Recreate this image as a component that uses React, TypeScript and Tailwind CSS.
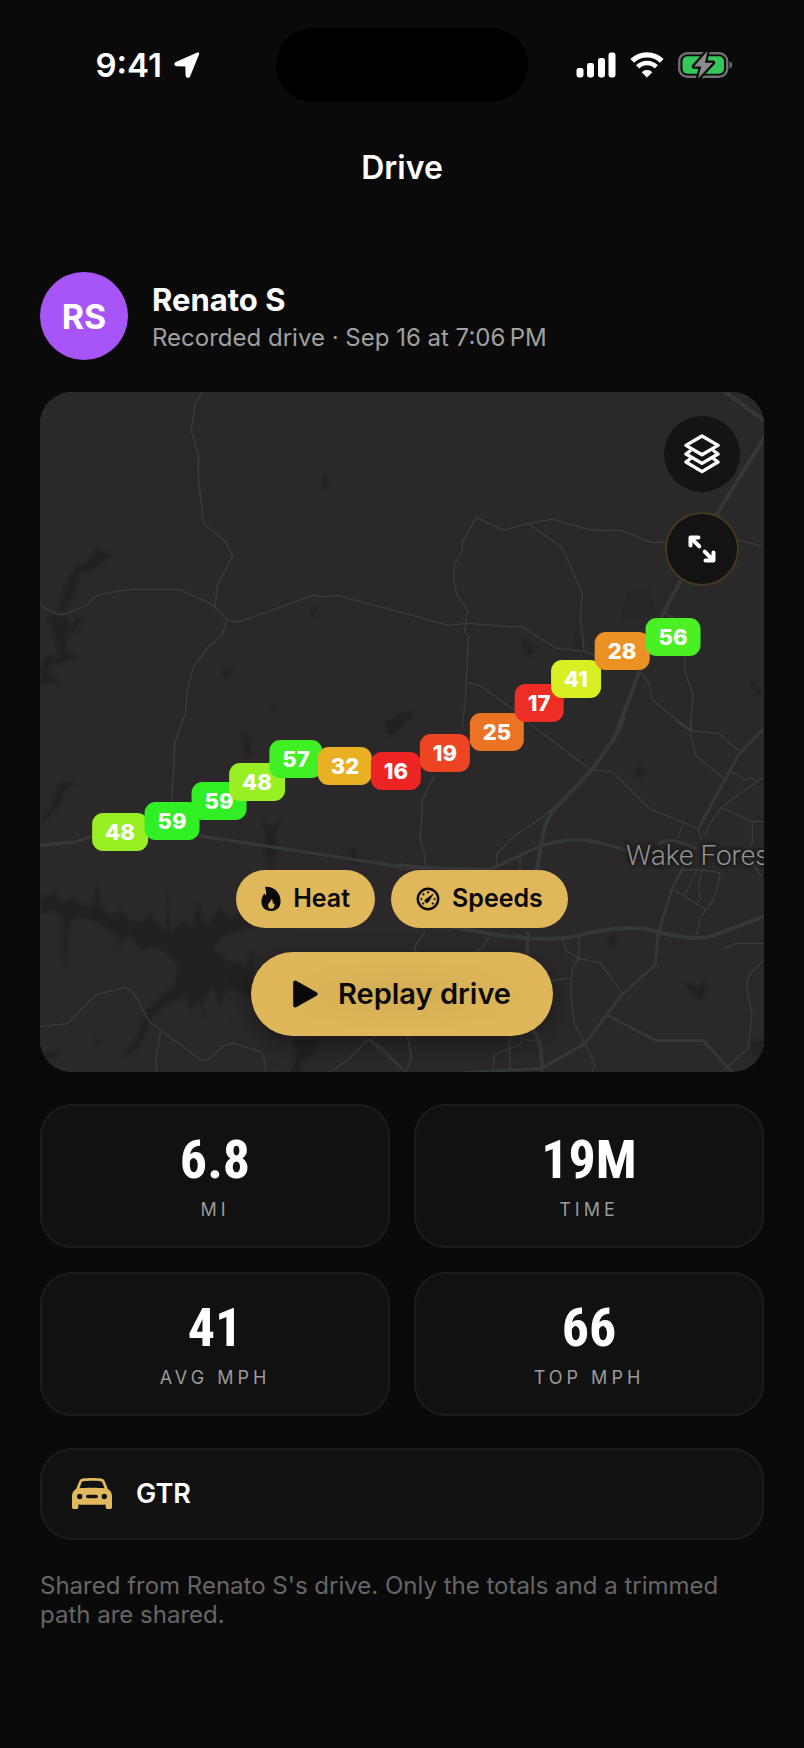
import React from "react";

const UI_FONT = "font-['Inter','Liberation_Sans',sans-serif]";
const DISPLAY_FONT = "font-['Roboto_Condensed','Roboto',sans-serif]";

const MAP_WIDTH = 724;
const MAP_HEIGHT = 680;

type Pin = { speed: number; x: number; y: number; tint: string };

const pins: Pin[] = [
  { speed: 48, x: 80, y: 440, tint: "bg-[#97ef24]" },
  { speed: 59, x: 132, y: 429, tint: "bg-[#30ef24]" },
  { speed: 59, x: 179, y: 409, tint: "bg-[#30ef24]" },
  { speed: 48, x: 217, y: 390, tint: "bg-[#97ef24]" },
  { speed: 57, x: 256, y: 367, tint: "bg-[#40ef24]" },
  { speed: 32, x: 305, y: 374, tint: "bg-[#eab024]" },
  { speed: 16, x: 356, y: 379, tint: "bg-[#ed2424]" },
  { speed: 19, x: 405, y: 361, tint: "bg-[#ed4424]" },
  { speed: 25, x: 457, y: 340, tint: "bg-[#eb7424]" },
  { speed: 17, x: 499, y: 311, tint: "bg-[#ed2e24]" },
  { speed: 41, x: 536, y: 287, tint: "bg-[#d8ef24]" },
  { speed: 28, x: 582, y: 259, tint: "bg-[#ec9224]" },
  { speed: 56, x: 633, y: 245, tint: "bg-[#4aef24]" },
];

const stats = [
  { value: "6.8", label: "MI" },
  { value: "19M", label: "TIME" },
  { value: "41", label: "AVG MPH" },
  { value: "66", label: "TOP MPH" },
];

function LocationArrow() {
  return (
    <svg viewBox="0 0 26 26" className="h-[26px] w-[26px]" fill="#fff" aria-hidden="true">
      <path
        d="M23.800 1.700 2.400 11.200c-1 .5-.8 1.600.3 1.600l10 .3.3 10.300c0 1.200 1.400 1.400 1.900.3Z"
        stroke="#fff"
        strokeWidth="2.800"
        strokeLinejoin="round"
      />
    </svg>
  );
}

function SignalBars() {
  return (
    <svg viewBox="0 0 40 26" className="h-[26px] w-10" fill="#fff" aria-hidden="true">
      <rect x="0.500" y="16" width="7" height="9.500" rx="2.400" />
      <rect x="11" y="11" width="7" height="14.500" rx="2.400" />
      <rect x="22" y="6" width="7" height="19.500" rx="2.400" />
      <rect x="32.500" y="0.500" width="7" height="25" rx="2.400" />
    </svg>
  );
}

function Wifi() {
  return (
    <svg viewBox="0 0 34 26" className="h-[26px] w-[34px]" fill="none" aria-hidden="true">
      <path d="M2.200 8.900a21 21 0 0 1 29.600 0" stroke="#fff" strokeWidth="5.200" />
      <path d="M7.700 14.800a13.200 13.200 0 0 1 18.600 0" stroke="#fff" strokeWidth="4.600" />
      <path
        d="M17 25.200l-4.900-4.900a7 7 0 0 1 9.800 0Z"
        fill="#fff"
        stroke="#fff"
        strokeWidth=".8"
        strokeLinejoin="round"
      />
    </svg>
  );
}

function Battery() {
  const bolt = "M29.500 0 16 15.500h7.200l-3.200 12L35 11.800h-8Z";
  return (
    <svg viewBox="0 0 55 28" className="h-7 w-[55px]" fill="none" aria-hidden="true">
      <rect x="1.200" y="2.200" width="48" height="23.600" rx="8" stroke="#6f6f6f" strokeWidth="2.400" />
      <rect x="4.500" y="5.300" width="41.500" height="17.500" rx="5" fill="#34c759" />
      <path d="M51.500 10.500v7c1.600-.5 2.600-1.900 2.600-3.500s-1-3-2.600-3.500Z" fill="#6f6f6f" />
      <path d={bolt} stroke="#0a0a0a" strokeWidth="4.400" strokeLinejoin="round" />
      <path d={bolt} fill="#8b8b8b" />
    </svg>
  );
}

function LayersIcon() {
  return (
    <svg
      viewBox="0 0 36 40"
      className="h-10 w-9"
      fill="none"
      stroke="#fff"
      strokeWidth="3.400"
      strokeLinejoin="round"
      strokeLinecap="round"
      aria-hidden="true"
    >
      <path d="M18 2 34 11.400 18 20.700 2 11.400Z" />
      <path d="M6 17 2 20 18 29.400 34 20l-4-3" />
      <path d="M6 25 2 28 18 37.600 34 28l-4-3" />
    </svg>
  );
}

function ExpandIcon() {
  return (
    <svg
      viewBox="0 0 28 28"
      className="h-7 w-7"
      fill="none"
      stroke="#fff"
      strokeWidth="4"
      strokeLinejoin="round"
      strokeLinecap="round"
      aria-hidden="true"
    >
      <path d="M2.500 10.500v-8h8M3.500 3.500l7.800 7.800" />
      <path d="M25.500 17.500v8h-8M24.500 24.500l-7.800-7.800" />
    </svg>
  );
}

function FlameIcon() {
  return (
    <svg viewBox="0 0 20 26" className="h-[26px] w-5" aria-hidden="true">
      <path
        fill="#0a0a0a"
        fillRule="evenodd"
        d="M5.200.8C12.400.6 19.600 6 19.600 15.400c0 5.900-4 9.600-9.700 9.600C4.200 25 .4 21.300.4 15.800c0-3.800 1.700-6.300 2.600-7.700.3-.5.9-.4 1.100.1.200.5.500.9.900 1.200.4-2.400.2-4.800-.8-7.100-.3-.8.1-1.500 1-1.500ZM10.600 12.400c.2 2.700-3.500 4-3.500 7 0 2 1.300 3.300 3.100 3.300 2 0 3.300-1.400 3.300-3.300 0-1-.2-1.800-.7-2.600-.2.700-.5 1.100-1 1.400.1-2-.1-4.100-1.200-5.800Z"
      />
    </svg>
  );
}

function GaugeIcon() {
  return (
    <svg viewBox="0 0 24 24" className="h-6 w-6" fill="none" aria-hidden="true">
      <circle cx="12" cy="12" r="10.200" stroke="#0a0a0a" strokeWidth="2.400" />
      <path
        d="M17 7.200 10.300 12a1.900 1.900 0 1 0 2.300 2.500Z"
        fill="#0a0a0a"
        stroke="#0a0a0a"
        strokeWidth=".8"
        strokeLinejoin="round"
      />
      <g fill="#0a0a0a">
        <circle cx="12" cy="5.400" r="1.100" />
        <circle cx="7.400" cy="7.400" r="1.100" />
        <circle cx="5.400" cy="12" r="1.100" />
        <circle cx="7.200" cy="16.600" r="1.100" />
        <circle cx="16.800" cy="16.600" r="1.100" />
        <circle cx="18.600" cy="12" r="1.100" />
      </g>
    </svg>
  );
}

function PlayIcon() {
  return (
    <svg viewBox="0 0 25 28" className="h-7 w-[25px]" aria-hidden="true">
      <path
        d="M1.200 2.500v23c0 .9.800 1.200 1.500.8l20.400-11.300c.8-.5.8-1.500 0-2L2.700 1.700C2 1.300 1.200 1.600 1.200 2.500Z"
        fill="#0a0a0a"
        stroke="#0a0a0a"
        strokeWidth="2"
        strokeLinejoin="round"
      />
    </svg>
  );
}

function CarIcon() {
  return (
    <svg viewBox="0 0 40 32" className="h-8 w-10" aria-hidden="true">
      <path
        fill="#e0b95c"
        fillRule="evenodd"
        d="M11 .6C13.500.2 16.500 0 20 0s6.500.2 9 .6c1.900.3 3.300 1.400 4 3.100l2.700 7.100c2.600 1.700 4.300 4 4.300 7V29.600c0 .8-.6 1.400-1.400 1.400h-3.500c-.8 0-1.400-.6-1.400-1.400V26.400C29.500 26.700 25 26.800 20 26.800s-9.500-.1-13.700-.4v3.200c0 .8-.6 1.400-1.400 1.400H1.400C.6 31 0 30.400 0 29.600V17.800c0-3 1.700-5.300 4.300-7L7 3.700C7.700 2 9.100.9 11 .6ZM11.200 3.300c-.8.1-1.300.6-1.600 1.300L7.500 10.300C10.800 9.900 15 9.700 20 9.700s9.200.2 12.500.6L30.400 4.600c-.3-.7-.8-1.200-1.600-1.300C26.400 3 23.400 2.800 20 2.800s-6.400.2-8.800.5ZM7.700 15.800a2.700 2.700 0 1 0 0 5.400 2.700 2.700 0 0 0 0-5.400Zm24.600 0a2.700 2.700 0 1 0 0 5.400 2.700 2.700 0 0 0 0-5.400ZM15.800 16.700a1.800 1.800 0 0 0 0 3.600h8.400a1.800 1.800 0 0 0 0-3.600Z"
      />
    </svg>
  );
}

/* Base map, drawn at three units per pixel in four tiles. */
function BaseMap() {
  return (
    <svg
      viewBox="0 0 2172 2040"
      preserveAspectRatio="xMidYMid slice"
      className="absolute inset-0 h-full w-full"
      fill="none"
      aria-hidden="true"
    >
      <defs>
        <filter id="soft" colorInterpolationFilters="sRGB">
          <feGaussianBlur stdDeviation="4" />
        </filter>
      </defs>
      <rect width="2172" height="2040" fill="#292929" />

      <g fill="#2a2829">
        <path d="M0 60H460V180L390 200V420L240 520 60 600H0Z" />
        <path d="M900 50 1040 130V180H1090V240H1020V310H930V180L890 160Z" />
        <path d="M560 740 720 670 850 720 960 780 1140 700 1300 780 1400 1100 1100 1160 620 1160Z" />
        <path d="M0 1100H560L900 1040 1500 1020 1700 1000 2172 1100V1700L1700 2040H0Z" />
        <path d="M1760 600 1830 580 1850 670 1740 690Z" fill="#272728" />
        <path d="M360 820H460V920H370Z" />
      </g>

      <g fill="#212121" filter="url(#soft)">
        <path d="M170 470 215 490 150 540 120 540 100 610 75 660 50 665 85 560 110 520 145 510Z" />
        <path d="M20 665 90 680 85 720 110 680 130 680 110 715 80 725 80 780 120 795 75 805 60 820 30 815 25 840 70 880 30 870 0 880V830L20 790 60 800 45 730Z" />
        <path d="M850 245 868 265 858 292 845 275Z" />
        <path d="M812 670 828 640 830 660 815 676Z" />
        <path d="M545 830 578 832 565 860 550 852Z" />
        <path d="M688 930 708 955 698 960Z" />
        <path d="M1040 1005 1060 985 1075 965 1095 970 1120 955 1110 980 1085 995 1050 1030Z" />
        <path d="M1445 735 1485 775 1465 795 1450 765Z" />
        <path d="M1610 725 1625 755 1605 775Z" />
        <path d="M2135 860 2165 900 2150 910Z" />
        <path d="M1080 965 1120 955 1095 990Z" />
      </g>

      <g transform="translate(0 984)" fill="#212121" filter="url(#soft)">
        <path d="M60 190 105 185 70 215 60 250 30 290 0 310 35 255Z" />
        <path d="M605 30 625 50 635 110 620 110Z" />
        <path d="M665 300 690 320 730 300 700 340 715 380 690 450 675 400 680 340Z" />
        <path d="M0 540 50 515 60 545 110 530 120 555 160 560 175 480 180 560 210 590 240 570 270 600 310 610 330 580 350 610 380 640 385 540 380 510 390 640 430 600 460 620 470 550 500 620 540 560 570 600 620 540 640 620 560 640 520 680 560 720 620 740 640 690 640 830 560 800 540 860 520 800 490 840 495 900 480 840 450 870 440 830 380 850 330 900 300 980 245 1015 290 950 320 870 400 800 420 740 380 700 350 680 300 690 270 640 220 700 240 650 180 610 130 590 90 600 75 750 65 700 70 600 50 570 0 580Z" />
        <path d="M160 950 185 965 170 980Z" />
        <path d="M0 1000 40 1000 60 990 50 1015 20 1020Z" />
        <path d="M760 960 840 955 820 1000 780 1030 790 1060H750L770 1010Z" />
        <path d="M930 390 945 380 950 430 935 430Z" />
        <path d="M1035 0H1090L1070 40 1045 40Z" />
      </g>
      <g transform="translate(1080 984)" fill="#212121" filter="url(#soft)">
        <path d="M705 165 720 135 740 160 725 170Z" />
        <path d="M620 650 650 652 632 690Z" />
        <path d="M855 790 895 800 915 780 920 820 905 835 885 832Z" />
        <path d="M1050 965 1092 960V1000L1060 1010Z" />
      </g>

      {/* minor roads */}
      <g stroke="#3b3c3c" strokeWidth="4" strokeLinejoin="round">
        <g transform="translate(0 -6)">
          <path d="M485 6 466 40 454 122 476 200 475 265 491 402 555 453 578 497 532 587 525 650" />
          <path d="M0 642Q15 660 58 674 90 672 138 645L172 617Q220 603 280 598H420L515 643 562 690 597 696 822 615 855 621 888 616 950 632 1140 682 1225 706 1282 700 1410 710 1445 709 1548 774 1632 785 1700 805" />
          <path d="M562 690 545 737 507 768 460 830 441 908 437 968 405 1055 395 1240" />
        </g>
        <g transform="translate(1080 -6)">
          <path d="M194 725 202 662 170 610 162 570V525L187 483V457L229 382 310 421 384 400 458 388 573 420 665 422 752 457 800 457M1015 450 1090 470" />
          <path d="M384 400 487 474 547 610 541 685 553 785" />
          <path d="M194 725 205 738 196 930 187 1010" />
          <path d="M203 877 243 888 355 970" />
          <path d="M720 845 748 880 755 925Q770 945 870 1018L879 915 855 845V795" />
          <path d="M785 665 830 690" />
        </g>
        <g transform="translate(1080 984)">
          <path d="M385 8 570 148 640 157 748 265 895 327" />
          <path d="M105 165 67 240 61 358 73 400 75 440" />
          <path d="M290 440V402L350 342 430 290 475 250" />
          <path d="M825 0 870 32 955 40 1017 93M873 0 872 50 887 105 970 174" />
          <path d="M995 155 1035 180 1050 172 1070 185 1090 172M1085 175 965 262 930 310 915 350M968 264 1055 305H1092M1057 305V370L1035 400 1085 468" />
          <path d="M850 310 832 355M895 327 905 360M848 450 890 448 960 458 958 475 940 540 900 595 890 645" />
          <path d="M890 450 855 524M905 452 895 500 902 535 890 550M820 507 918 570" />
          <path d="M360 410V455M0 448 75 443" />
          <path d="M485 655 498 692 535 715 600 728 668 820M538 650 537 710 516 750 512 820 523 910 555 970 585 1035 575 1060M510 773 450 783" />
          <path d="M967 688 1010 670H1092M1090 720 1046 768 1039 800 1056 880 1045 985 970 1050" />
          <path d="M75 635 45 680V710M275 640 245 685 180 720M340 640 385 655M22 950 35 1010 15 1060" />
          <path d="M368 925 362 972 285 1005 278 1048M328 950 330 1050M370 958 418 965" />
        </g>
        <g transform="translate(0 984)">
          <path d="M0 920 82 911 168 824 255 802 280 818 328 905 480 1018Q495 1025 510 1015L548 978 582 969 662 995Q675 1010 677 1060" />
          <path d="M362 937 347 1015 351 1060" />
          <path d="M868 1054 918 1025 985 958 1095 1054Q1115 1030 1112 1000L1103 950" />
          <path d="M985 958 1030 985 1090 1050M1140 655 1125 680V700" />
        </g>
      </g>

      {/* highways */}
      <g stroke="#363737" strokeLinecap="round" strokeLinejoin="round">
        <g transform="translate(1080 -6)" strokeWidth="12">
          <path d="M975 6 1090 90" />
          <path d="M1095 140 1020 260 955 365 930 415M840 575 785 680 720 840 650 1025" />
        </g>
        <g transform="translate(1080 984)" strokeWidth="12">
          <path d="M670 -5Q655 40 625 80L575 150 470 260Q435 300 430 340L410 450M385 640 380 705M400 930Q430 970 425 1050" />
          <path
            d="M0 435 75 443 270 448 400 388Q510 340 610 372L680 390M780 368Q820 350 885 385"
            strokeWidth="10"
          />
          <path
            d="M1092 25 1015 105 895 327M850 440 815 510 775 640 765 735 665 825 555 970 425 1045 190 1058"
            strokeWidth="9"
          />
          <path d="M100 610 290 645Q430 665 520 650 650 615 740 627 870 665 930 650L1092 590" />
          <path d="M625 888 768 962H910L995 1054" strokeWidth="9" />
        </g>
        <g transform="translate(0 984)" strokeWidth="10">
          <path d="M0 376 105 366 170 344M470 346 1080 440" />
        </g>
      </g>
    </svg>
  );
}

function StatusBar() {
  return (
    <div className="grid grid-cols-[1fr_252px_1fr] items-center">
      <div className="flex items-center justify-end gap-3 pr-[76px]">
        <span className="text-[33px] leading-10 font-semibold">9:41</span>
        <LocationArrow />
      </div>
      <div className="h-[74px] rounded-full bg-black" />
      <div className="flex items-center gap-[14px] pl-12">
        <SignalBars />
        <Wifi />
        <Battery />
      </div>
    </div>
  );
}

function DriveMap() {
  return (
    <section
      aria-label="Drive map"
      className="relative mt-8 flex aspect-[724/680] flex-col justify-between overflow-hidden rounded-[32px] bg-[#292929]"
    >
      <BaseMap />
      <span className="absolute top-[448px] left-[586px] font-['Roboto',sans-serif] text-[28px] leading-8 font-light whitespace-nowrap text-[#949494] [text-shadow:0_0_4px_#111,0_0_4px_#111]">
        Wake Forest
      </span>
      {pins.map((pin, i) => (
        <span
          key={i}
          className={`absolute -translate-x-1/2 -translate-y-1/2 rounded-[11px] px-[13px] text-[22px] leading-[38px] font-extrabold ${pin.tint}`}
          style={{
            left: `${(pin.x / MAP_WIDTH) * 100}%`,
            top: `${(pin.y / MAP_HEIGHT) * 100}%`,
          }}
        >
          {pin.speed}
        </span>
      ))}

      <div className="relative flex flex-col items-center gap-5 self-end pt-6 pr-6">
        <button
          type="button"
          aria-label="Map layers"
          className="flex size-[76px] items-center justify-center rounded-full bg-[#141414]"
        >
          <LayersIcon />
        </button>
        <button
          type="button"
          aria-label="Expand map"
          className="flex size-[74px] items-center justify-center rounded-full border-2 border-[#43391f] bg-[#131313]"
        >
          <ExpandIcon />
        </button>
      </div>

      <div className="relative flex flex-col items-center gap-6 pb-9 text-[#0a0a0a]">
        <div className="flex gap-4">
          <button
            type="button"
            className="flex h-[58px] items-center gap-3 rounded-full bg-[#e0b75a] px-[25px] text-[25px] font-semibold"
          >
            <FlameIcon />
            Heat
          </button>
          <button
            type="button"
            className="flex h-[58px] items-center gap-3 rounded-full bg-[#e0b75a] px-[25px] text-[25px] font-semibold"
          >
            <GaugeIcon />
            Speeds
          </button>
        </div>
        <button
          type="button"
          className="flex h-[84px] items-center gap-5 rounded-full bg-[#dfb75a] bg-[radial-gradient(ellipse_at_center,#d4ae55_0%,#dfb75a_65%)] px-[42px] text-[29px] font-semibold shadow-[0_8px_24px_rgba(0,0,0,0.35)]"
        >
          <PlayIcon />
          Replay drive
        </button>
      </div>
    </section>
  );
}

export default function App() {
  return (
    <div className={`min-h-screen bg-[#0a0a0a] pt-7 pb-[120px] text-white ${UI_FONT}`}>
      <StatusBar />
      <h1 className="mt-[46px] text-center text-[32px] leading-10 font-semibold">Drive</h1>

      <main className="px-10 pt-[84px]">
        <header className="flex items-center gap-6">
          <div className="flex size-[88px] items-center justify-center rounded-full bg-[#a855f7] text-[34px] font-bold">
            RS
          </div>
          <div className="pt-1">
            <h2 className="text-[31px] leading-10 font-bold">Renato S</h2>
            <p className="text-2xl leading-9 text-[#a0a0a0]">
              Recorded drive · Sep 16 at 7:06{"\u202f"}PM
            </p>
          </div>
        </header>

        <DriveMap />

        <dl className="mt-8 grid grid-cols-2 gap-6">
          {stats.map((stat) => (
            <div
              key={stat.label}
              className="flex h-36 flex-col-reverse items-center justify-center gap-3 rounded-[32px] border-2 border-[#1c1c1c] bg-[#111111] pt-1"
            >
              <dt className="text-[18px] leading-6 tracking-[4px] text-[#9a9a9a]">{stat.label}</dt>
              <dd className={`text-[54px] leading-[52px] font-bold ${DISPLAY_FONT}`}>{stat.value}</dd>
            </div>
          ))}
        </dl>

        <section className="mt-8 flex h-[92px] items-center gap-6 rounded-[32px] border-2 border-[#1c1c1c] bg-[#111111] px-[30px]">
          <CarIcon />
          <span className="text-[27px] font-semibold">GTR</span>
        </section>

        <p className="mt-[31px] text-2xl leading-[29px] text-[#666666]">
          Shared from Renato S's drive. Only the totals and a trimmed path are shared.
        </p>
      </main>
    </div>
  );
}
